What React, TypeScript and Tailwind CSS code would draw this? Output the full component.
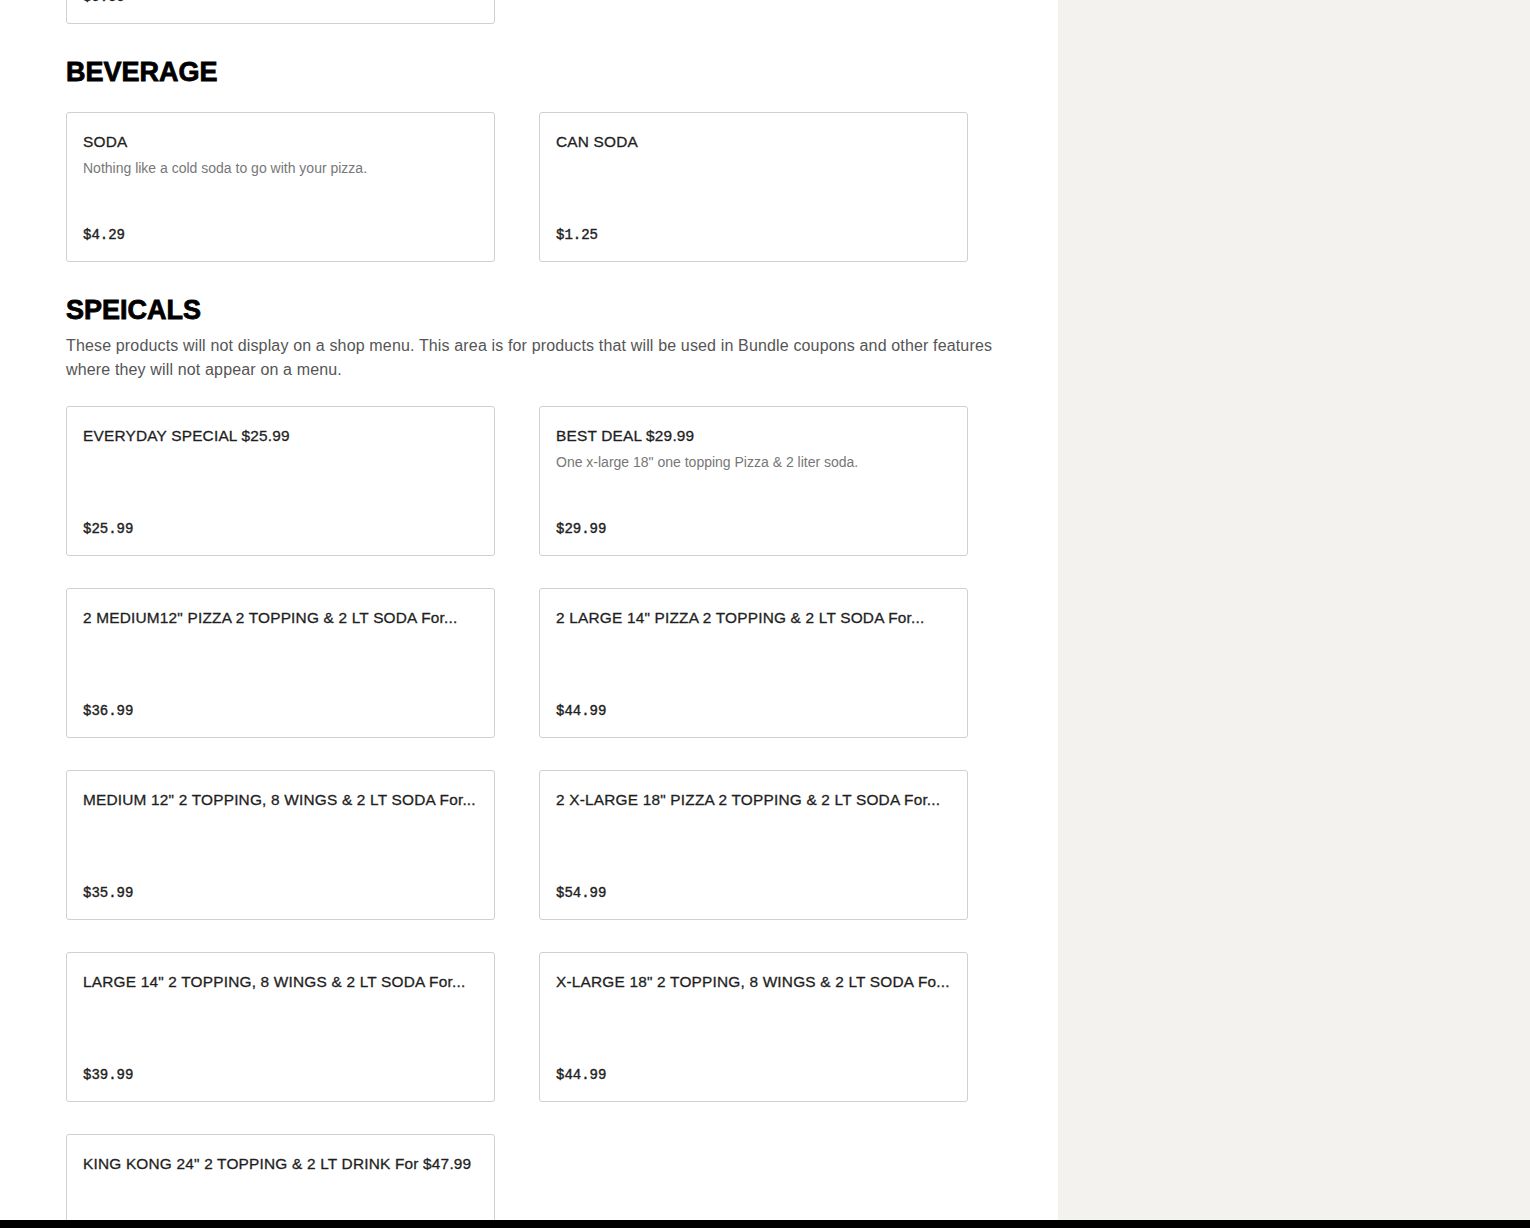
import React from "react";

type Item = { title: string; desc?: string; price: string };

const beverage: Item[] = [
  { title: "SODA", desc: "Nothing like a cold soda to go with your pizza.", price: "$4.29" },
  { title: "CAN SODA", price: "$1.25" },
];

const specials: Item[] = [
  { title: "EVERYDAY SPECIAL $25.99", price: "$25.99" },
  { title: "BEST DEAL $29.99", desc: 'One x-large 18" one topping Pizza & 2 liter soda.', price: "$29.99" },
  { title: '2 MEDIUM12" PIZZA 2 TOPPING & 2 LT SODA For...', price: "$36.99" },
  { title: '2 LARGE 14" PIZZA 2 TOPPING & 2 LT SODA For...', price: "$44.99" },
  { title: 'MEDIUM 12" 2 TOPPING, 8 WINGS & 2 LT SODA For...', price: "$35.99" },
  { title: '2 X-LARGE 18" PIZZA 2 TOPPING & 2 LT SODA For...', price: "$54.99" },
  { title: 'LARGE 14" 2 TOPPING, 8 WINGS & 2 LT SODA For...', price: "$39.99" },
  { title: 'X-LARGE 18" 2 TOPPING, 8 WINGS & 2 LT SODA Fo...', price: "$44.99" },
  { title: 'KING KONG 24" 2 TOPPING & 2 LT DRINK For $47.99', price: "$47.99" },
];

function Card({ item }: { item: Item }) {
  return (
    <div className="flex h-[150px] w-[429px] flex-col rounded-[3px] border border-[#d0d0d0] bg-white px-4 pb-[14px] pt-[17px]">
      <div className="overflow-hidden whitespace-nowrap text-[15.4px] leading-6 tracking-[0.2px] text-[#1f1f1f] [-webkit-text-stroke:0.3px_#1f1f1f] [font-family:'Liberation_Sans',Arial,sans-serif]">
        {item.title}
      </div>
      {item.desc && (
        <div className="mt-1 text-[14px] leading-5 text-[#777777] [font-family:'Liberation_Sans',Arial,sans-serif]">
          {item.desc}
        </div>
      )}
      <div className="mt-auto text-[14px] leading-6 text-[#222222] [-webkit-text-stroke:0.4px_#222222] [font-family:'Liberation_Mono','Courier_New',monospace]">
        {item.price}
      </div>
    </div>
  );
}

function Heading({ children }: { children: React.ReactNode }) {
  return (
    <h2 className="text-[27px] font-black leading-8 text-black [-webkit-text-stroke:0.8px_black] [font-family:'Liberation_Sans',Arial,sans-serif]">
      {children}
    </h2>
  );
}

export default function App() {
  return (
    <div className="flex h-[1228px] w-full flex-col overflow-hidden bg-white">
      <div className="flex min-h-0 flex-1">
        <main className="w-[1058px] shrink-0 overflow-hidden bg-white px-[66px]">
          <div className="-mt-[126px]">
            <div className="grid grid-cols-[429px_429px] gap-x-[44px] gap-y-8">
              <Card item={{ title: "", price: "$9.99" }} />
            </div>

            <section className="mt-8">
              <Heading>BEVERAGE</Heading>
              <div className="mt-6 grid grid-cols-[429px_429px] gap-x-[44px] gap-y-8">
                {beverage.map((it, i) => (
                  <Card key={i} item={it} />
                ))}
              </div>
            </section>

            <section className="mt-8">
              <Heading>SPEICALS</Heading>
              <p className="mt-2 w-[940px] text-[16px] leading-6 tracking-[0.15px] text-[#555555] [font-family:'Liberation_Sans',Arial,sans-serif]">
                These products will not display on a shop menu. This area is for products that will be used in Bundle coupons and other features where they will not appear on a menu.
              </p>
              <div className="mt-6 grid grid-cols-[429px_429px] gap-x-[44px] gap-y-8">
                {specials.map((it, i) => (
                  <Card key={i} item={it} />
                ))}
              </div>
            </section>
          </div>
        </main>
        <aside className="flex-1 bg-[#f3f2ef]" />
      </div>
      <div className="h-2 w-full shrink-0 bg-black" />
    </div>
  );
}
